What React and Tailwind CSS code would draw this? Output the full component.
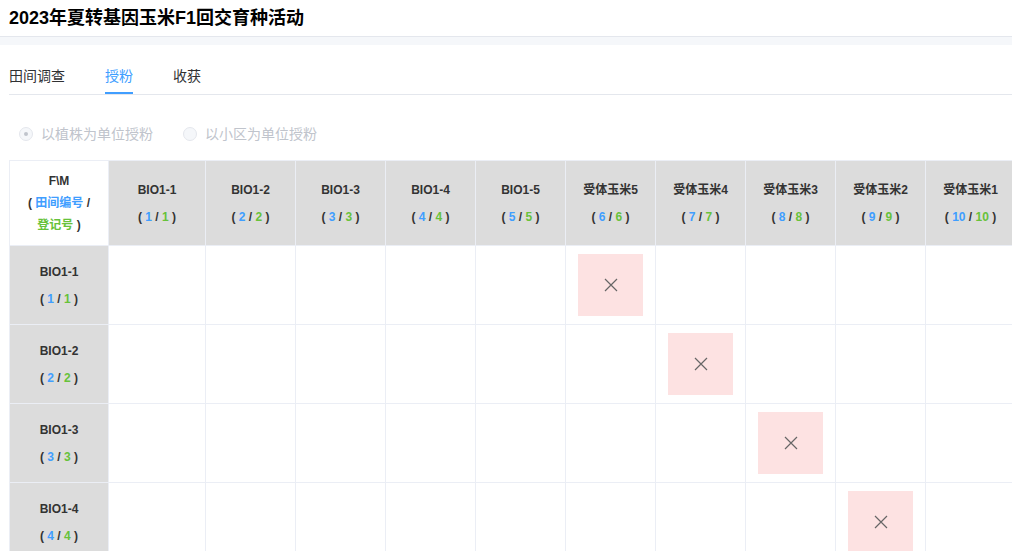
export default function App() {
  const cols = [
    ["BIO1-1", 1], ["BIO1-2", 2], ["BIO1-3", 3], ["BIO1-4", 4], ["BIO1-5", 5],
    ["受体玉米5", 6], ["受体玉米4", 7], ["受体玉米3", 8], ["受体玉米2", 9], ["受体玉米1", 10],
  ];
  const widths = [97, 90, 90, 90, 90, 90, 90, 90, 90, 90];
  const rows = [["BIO1-1", 1], ["BIO1-2", 2], ["BIO1-3", 3], ["BIO1-4", 4]];
  const Num = ({ n }) => (
    <div className="mt-[9px] text-[12px] font-bold text-[#333]">
      ( <span className="text-[#409eff]">{n}</span> / <span className="text-[#67c23a]">{n}</span> )
    </div>
  );
  return (
    <div className="w-[1012px] h-[551px] overflow-hidden bg-white" style={{ fontFamily: '"Liberation Sans","Noto Sans CJK SC",sans-serif' }}>
      <div className="h-[37px] border-b border-[#e4e7ed] px-[9px] flex items-center">
        <h1 className="text-[18px] font-bold text-black">2023年夏转基因玉米F1回交育种活动</h1>
      </div>
      <div className="h-[8px] bg-[#f5f7fa]" />
      <div className="pl-[9px]">
        <div className="flex h-[50px] items-end border-b border-[#e4e7ed] text-[14px] text-[#303133]">
          <div className="pb-[7px] w-[96px]">田间调查</div>
          <div className="pb-[5px] mr-[40px] text-[#409eff] border-b-2 border-[#409eff]">授粉</div>
          <div className="pb-[7px]">收获</div>
        </div>
        <div className="flex items-center h-[65px] pt-[13px] text-[14px] text-[#c0c4cc] pl-[10px]">
          <span className="w-[14px] h-[14px] rounded-full border border-[#e4e7ed] bg-[#f5f7fa] flex items-center justify-center mr-[8px]"><span className="w-[4px] h-[4px] rounded-full bg-[#c0c4cc]" /></span>
          <span className="mr-[30px]">以植株为单位授粉</span>
          <span className="w-[14px] h-[14px] rounded-full border border-[#e4e7ed] bg-[#f5f7fa] mr-[8px]" />
          <span>以小区为单位授粉</span>
        </div>
        <div className="w-[1003px] overflow-hidden">
          <table className="border-collapse table-fixed text-center" style={{ width: 1006 }}>
            <thead>
              <tr className="h-[85px]">
                <th className="w-[99px] border border-[#ebeef5] bg-white text-[12px] font-bold text-[#333] leading-[22px]">
                  <div>F\M</div>
                  <div>( <span className="text-[#409eff]">田间编号</span> /</div>
                  <div><span className="text-[#67c23a]">登记号</span> )</div>
                </th>
                {cols.map(([name, n], i) => (
                  <th key={i} style={{ width: widths[i] }} className="border border-[#ebeef5] bg-[#dcdcdc] text-[12px] font-bold text-[#333] whitespace-nowrap">
                    <div>{name}</div>
                    <Num n={n} />
                  </th>
                ))}
              </tr>
            </thead>
            <tbody>
              {rows.map(([name, n], r) => (
                <tr key={r} className="h-[79px]">
                  <td className="border border-[#ebeef5] bg-[#dcdcdc] text-[12px] font-bold text-[#333]">
                    <div>{name}</div>
                    <Num n={n} />
                  </td>
                  {cols.map((_, c) => (
                    <td key={c} className="border border-[#ebeef5]">
                      {c === r + 5 && (
                        <div className="mx-auto w-[65px] h-[62px] bg-[#fde2e2] flex items-center justify-center">
                          <svg width="14" height="14" viewBox="0 0 14 14"><path d="M1 1L13 13M13 1L1 13" stroke="#666" strokeWidth="1.2" /></svg>
                        </div>
                      )}
                    </td>
                  ))}
                </tr>
              ))}
            </tbody>
          </table>
        </div>
      </div>
    </div>
  );
}
